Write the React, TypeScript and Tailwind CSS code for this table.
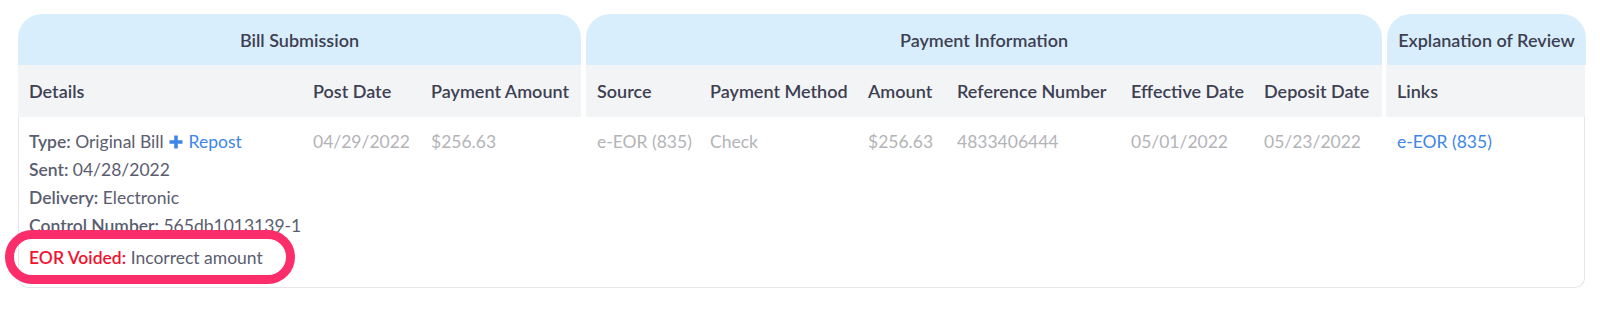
import React from "react";

type Col = { label: string; w: string };

const billCols: Col[] = [
  { label: "Details", w: "w-[284px]" },
  { label: "Post Date", w: "w-[118px]" },
  { label: "Payment Amount", w: "w-[161px]" },
];

const payCols: Col[] = [
  { label: "Source", w: "w-[113px]" },
  { label: "Payment Method", w: "w-[158px]" },
  { label: "Amount", w: "w-[89px]" },
  { label: "Reference Number", w: "w-[174px]" },
  { label: "Effective Date", w: "w-[133px]" },
  { label: "Deposit Date", w: "w-[129px]" },
];

const eorCols: Col[] = [{ label: "Links", w: "w-[199px]" }];

const PlusIcon = () => (
  <svg width="14" height="14" viewBox="0 0 14 14" className="inline-block ml-[5px] mr-[6px] -mt-[3px]">
    <path d="M7 0.5v13M0.5 7h13" stroke="#3f86e8" strokeWidth="3.6" strokeLinecap="butt" />
  </svg>
);

const GroupHeader = ({ title, w }: { title: string; w: string }) => (
  <div className={`${w} h-[51px] bg-[#d9eefc] rounded-t-[24px] flex items-center justify-center font-semibold text-[18px] text-[#3d4052]`}>
    {title}
  </div>
);

const HeaderCells = ({ cols }: { cols: Col[] }) => (
  <div className="flex bg-[#f3f4f6] h-[52px]">
    {cols.map((c) => (
      <div key={c.label} className={`${c.w} px-[11px] flex items-center font-semibold text-[18px] text-[#3d4052] whitespace-nowrap`}>
        {c.label}
      </div>
    ))}
  </div>
);

const Label = ({ children }: { children: React.ReactNode }) => (
  <span className="font-semibold text-[#5a5d6f]">{children}</span>
);

export default function App() {
  return (
    <div className="relative w-[1600px] h-[310px] bg-white pl-[18px] pt-[14px] font-['Lato','Liberation_Sans',sans-serif] text-[17.5px] leading-[28px]">
      {/* group headers */}
      <div className="flex gap-[5px]">
        <GroupHeader title="Bill Submission" w="w-[563px]" />
        <GroupHeader title="Payment Information" w="w-[796px]" />
        <GroupHeader title="Explanation of Review" w="w-[199px]" />
      </div>

      {/* column headers */}
      <div className="flex">
        <HeaderCells cols={billCols} />
        <div className="w-[5px]" />
        <HeaderCells cols={payCols} />
        <div className="w-[4px]" />
        <HeaderCells cols={eorCols} />
      </div>

      {/* body */}
      <div className="w-[1567px] h-[171px] flex border-x border-b border-[#e5e6ea] rounded-b-[10px] pt-[11px] text-[#b3b4b8]">
        <div className="w-[283px] pl-[10px] pr-[11px] text-[#5a5d6f]">
          <div className="whitespace-nowrap">
            <Label>Type:</Label> Original Bill
            <PlusIcon />
            <span className="text-[#3f86e8]">Repost</span>
          </div>
          <div>
            <Label>Sent:</Label> 04/28/2022
          </div>
          <div>
            <Label>Delivery:</Label> Electronic
          </div>
          <div className="whitespace-nowrap">
            <Label>Control Number:</Label> 565db1013139-1
          </div>
          <div className="mt-[4px] whitespace-nowrap">
            <span className="font-semibold text-[#f2122f]">EOR Voided:</span> Incorrect amount
          </div>
        </div>
        <div className="w-[118px] px-[11px]">04/29/2022</div>
        <div className="w-[161px] px-[11px]">$256.63</div>
        <div className="w-[5px]" />
        <div className="w-[113px] px-[11px] whitespace-nowrap">e-EOR (835)</div>
        <div className="w-[158px] px-[11px]">Check</div>
        <div className="w-[89px] px-[11px]">$256.63</div>
        <div className="w-[174px] px-[11px]">4833406444</div>
        <div className="w-[133px] px-[11px]">05/01/2022</div>
        <div className="w-[129px] px-[11px]">05/23/2022</div>
        <div className="w-[4px]" />
        <div className="w-[198px] px-[11px] text-[#3f86e8] whitespace-nowrap">e-EOR (835)</div>
      </div>

      {/* annotation ring */}
      <div className="absolute left-[5px] top-[230px] w-[290px] h-[54px] rounded-full border-[9px] border-[#fb2d6a]" />
    </div>
  );
}
